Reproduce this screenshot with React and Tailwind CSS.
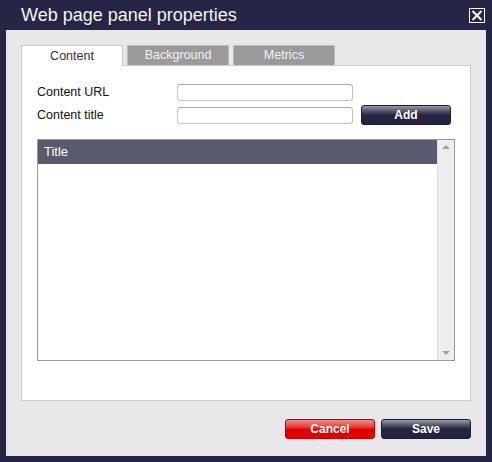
import React from 'react';

const font = { fontFamily: '"Liberation Sans", Arial, sans-serif' };

function Tab({ label, active }) {
  return (
    <div
      className={
        'w-[102px] h-[20px] flex items-center justify-center text-[12.5px] border border-b-0 ' +
        (active
          ? 'bg-white border-[#cccccc] text-[#333333] h-[21px] -mb-[1px] relative'
          : 'bg-[#9a9a9a] border-[#bdbdbd] text-[#f2f2f2]')
      }
    >
      {label}
    </div>
  );
}

function Button({ label, red }) {
  return (
    <button
      className={
        'w-[90px] h-[20px] rounded-[3px] border text-[12px] font-bold text-white flex items-center justify-center ' +
        (red
          ? 'bg-gradient-to-b from-[#f08a8a] via-[#e40000] to-[#e00000] border-[#c00000]'
          : 'bg-gradient-to-b from-[#9a9aaa] via-[#262542] to-[#232340] border-[#1c1c33]')
      }
    >
      {label}
    </button>
  );
}

function Input() {
  return (
    <input className="w-[176px] h-[17px] rounded-[3px] border border-[#c4c4c4] border-t-[#a8a8a8] bg-white outline-none" />
  );
}

export default function App() {
  return (
    <div className="w-[492px] h-[462px] bg-[#252545] flex flex-col" style={font}>
      {/* Title bar */}
      <div className="h-[30px] flex items-center justify-between pl-[21px] pr-[7px]">
        <span className="text-[18px] text-[#f4f4f4] leading-none pb-[1px]">Web page panel properties</span>
        <div className="w-[16px] h-[15px] border border-white flex items-center justify-center">
          <svg width="12" height="11" viewBox="0 0 12 11">
            <path d="M1.5 1 L10.5 10 M10.5 1 L1.5 10" stroke="white" strokeWidth="2" />
          </svg>
        </div>
      </div>

      {/* Body */}
      <div className="mx-[6px] mb-[6px] flex-1 bg-[#e8e8ea] px-[15px] pt-[15px] flex flex-col">
        <div className="flex gap-[4px]">
          <Tab label="Content" active />
          <Tab label="Background" />
          <Tab label="Metrics" />
        </div>
        <div className="h-[336px] bg-white border border-[#cccccc] pl-[15px] pr-[15px] pt-[18px] flex flex-col">
          <div className="flex items-center h-[17px]">
            <span className="w-[140px] text-[12.5px] text-[#111]">Content URL</span>
            <Input />
          </div>
          <div className="flex items-center h-[17px] mt-[6px]">
            <span className="w-[140px] text-[12.5px] text-[#111]">Content title</span>
            <Input />
            <div className="ml-[8px] -mt-[1px]">
              <Button label="Add" />
            </div>
          </div>
          <div className="mt-[15px] h-[222px] border border-[#9a9a9a] flex">
            <div className="flex-1 flex flex-col">
              <div className="h-[24px] bg-[#5a5a6e] text-white text-[13px] flex items-center pl-[6px]">Title</div>
            </div>
            <div className="w-[17px] bg-[#ededed] border-l border-[#e0e0e0] flex flex-col justify-between items-center py-[5px]">
              <svg width="8" height="4" viewBox="0 0 8 4"><path d="M0 4 L4 0 L8 4 Z" fill="#a0a0a0" /></svg>
              <svg width="8" height="4" viewBox="0 0 8 4"><path d="M0 0 L8 0 L4 4 Z" fill="#a0a0a0" /></svg>
            </div>
          </div>
        </div>
        <div className="flex justify-end gap-[6px] mt-[18px]">
          <Button label="Cancel" red />
          <Button label="Save" />
        </div>
      </div>
    </div>
  );
}
